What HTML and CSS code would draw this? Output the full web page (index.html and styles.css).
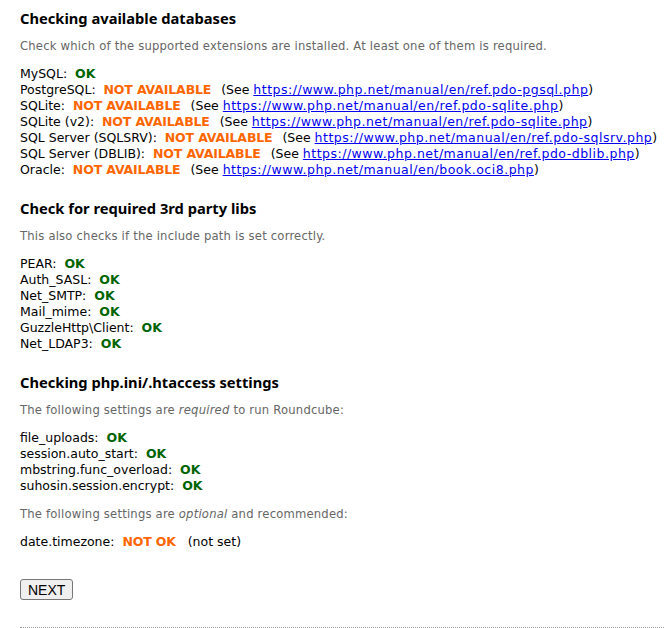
FILE: index.html
```
<!DOCTYPE html>
<html>
<head>
<meta charset="utf-8">
<link rel="stylesheet" href="styles.css">
</head>
<body>
<div class="page">
<h3>Checking available databases</h3>
<p class="hint">Check which of the supported extensions are installed. At least one of them is required.</p>
<div class="list">
MySQL:&nbsp; <span class="success">OK</span><br>
PostgreSQL:&nbsp; <span class="na">NOT AVAILABLE</span>&nbsp; <span class="see">(See <a href="#">https://www.php.net/manual/en/ref.pdo-pgsql.php</a>)</span><br>
SQLite:&nbsp; <span class="na">NOT AVAILABLE</span>&nbsp; <span class="see">(See <a href="#">https://www.php.net/manual/en/ref.pdo-sqlite.php</a>)</span><br>
SQLite (v2):&nbsp; <span class="na">NOT AVAILABLE</span>&nbsp; <span class="see">(See <a href="#">https://www.php.net/manual/en/ref.pdo-sqlite.php</a>)</span><br>
SQL Server (SQLSRV):&nbsp; <span class="na">NOT AVAILABLE</span>&nbsp; <span class="see">(See <a href="#">https://www.php.net/manual/en/ref.pdo-sqlsrv.php</a>)</span><br>
SQL Server (DBLIB):&nbsp; <span class="na">NOT AVAILABLE</span>&nbsp; <span class="see">(See <a href="#">https://www.php.net/manual/en/ref.pdo-dblib.php</a>)</span><br>
Oracle:&nbsp; <span class="na">NOT AVAILABLE</span>&nbsp; <span class="see">(See <a href="#">https://www.php.net/manual/en/book.oci8.php</a>)</span>
</div>

<h3>Check for required 3rd party libs</h3>
<p class="hint">This also checks if the include path is set correctly.</p>
<div class="list">
PEAR:&nbsp; <span class="success">OK</span><br>
Auth_SASL:&nbsp; <span class="success">OK</span><br>
Net_SMTP:&nbsp; <span class="success">OK</span><br>
Mail_mime:&nbsp; <span class="success">OK</span><br>
GuzzleHttp\Client:&nbsp; <span class="success">OK</span><br>
Net_LDAP3:&nbsp; <span class="success">OK</span>
</div>

<h3>Checking php.ini/.htaccess settings</h3>
<p class="hint">The following settings are <em>required</em> to run Roundcube:</p>
<div class="list">
file_uploads:&nbsp; <span class="success">OK</span><br>
session.auto_start:&nbsp; <span class="success">OK</span><br>
mbstring.func_overload:&nbsp; <span class="success">OK</span><br>
suhosin.session.encrypt:&nbsp; <span class="success">OK</span>
</div>
<p class="hint">The following settings are <em>optional</em> and recommended:</p>
<div class="list">
date.timezone:&nbsp; <span class="na">NOT OK</span>&nbsp;&nbsp; (not set)
</div>

<div class="actions"><button class="next" type="button">NEXT</button></div>
<div class="rule"></div>
</div>
</body>
</html>
```
FILE: styles.css
```
html, body {
  margin: 0;
  padding: 0;
  background: #fff;
}
.page {
  padding: 9px 0 0 20px;
  font-family: "DejaVu Sans", Verdana, sans-serif;
  font-size: 12.5px;
  line-height: 16px;
  color: #000;
}
h3 {
  font-family: "Noto Sans", "DejaVu Sans", sans-serif;
  font-size: 14.7px;
  line-height: 18px;
  font-weight: bold;
  margin: 0 0 11px 0;
}
.list + h3 {
  margin-top: 21px;
}
.hint {
  color: #666;
  font-size: 11.6px;
  letter-spacing: 0.2px;
  line-height: 16px;
  margin: 0 0 12px 0;
}
.list + .hint {
  margin-top: 12px;
}
.success {
  color: #006400;
  font-weight: bold;
}
.na {
  color: #f60;
  font-weight: bold;
  letter-spacing: -0.15px;
}
.see {
  padding-left: 2px;
}
a {
  color: #0000ee;
  text-decoration: underline;
  letter-spacing: 0.5px;
}
.actions {
  margin-top: 29px;
}
.next {
  font-family: "Liberation Sans", Arial, sans-serif;
  font-size: 14px;
  height: 21px;
  padding: 0 7px;
  background: #efefef;
  border: 1px solid #767676;
  border-radius: 3px;
  color: #000;
}
.rule {
  margin-top: 27px;
  border-top: 1px dotted #999;
}
```
